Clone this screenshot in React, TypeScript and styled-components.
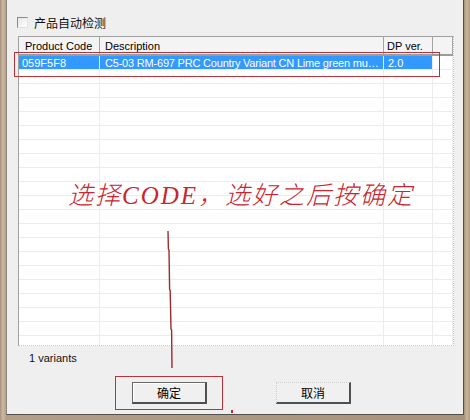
import { type FC } from "react"
import styled, { createGlobalStyle } from "styled-components"

const GlobalStyle = createGlobalStyle`
  html, body {
    margin: 0;
    padding: 0;
    background: #bca892;
  }
  body {
    font-family: "Liberation Sans", "Noto Sans CJK SC", sans-serif;
  }
`

const Frame = styled.div`
  width: 470px;
  height: 420px;
  box-sizing: border-box;
  padding: 0 6px 5px 6px;
  display: flex;
  background: linear-gradient(90deg, #a8927a 0px, #cdbba6 3px, #b39e87 6px, #a8927a 464px, #c9b6a0 467px, #ad977f 470px);
`

const Panel = styled.div`
  flex: 1;
  position: relative;
  display: flex;
  flex-direction: column;
  padding: 16px 9px 0 11px;
  background: #f0efef;
  border-left: 1px solid #8f857c;
  border-right: 1px solid #55504b;
  border-bottom: 1px solid #55504b;
`

const CheckRow = styled.label`
  display: flex;
  align-items: center;
  gap: 6px;
  height: 12px;
  font-family: "Noto Sans CJK SC", sans-serif;
  font-size: 12px;
  color: #111;
  margin-bottom: 8px;
`

const CheckBox = styled.span`
  width: 9px;
  height: 9px;
  margin-left: -1px;
  background: linear-gradient(135deg, #e6e6e6, #ffffff);
  border-top: 1px solid #8a8a8a;
  border-left: 1px solid #8a8a8a;
  border-right: 1px solid #e2e2e2;
  border-bottom: 1px solid #e2e2e2;
`

const List = styled.div`
  height: 310px;
  box-sizing: border-box;
  background: #fff;
  border-top: 1px solid #a0a0a0;
  border-left: 1px solid #a0a0a0;
  border-right: 1px dotted #c8c8c8;
  border-bottom: 1px dotted #c8c8c8;
  overflow: hidden;
  display: flex;
  flex-direction: column;
  font-size: 11px;
`

const COLS = "81px 284px 49px 1fr"

const HeaderRow = styled.div`
  display: grid;
  grid-template-columns: ${COLS};
  height: 19px;
  flex: none;
  box-sizing: border-box;
  background: #f5f4f4;
  border-bottom: 2px solid #9c9c9c;
`

const HeaderCell = styled.div<{ $pad: number }>`
  display: flex;
  align-items: center;
  padding-left: ${p => p.$pad}px;
  border-right: 1px solid #a4a4a4;
  color: #000;
  white-space: nowrap;
  overflow: hidden;
`

const Row = styled.div`
  display: grid;
  grid-template-columns: ${COLS};
  height: 14px;
  flex: none;
  box-sizing: border-box;
  border-bottom: 1px solid #ececec;
`

const Cell = styled.div<{ $selected?: boolean; $pad?: number; $tight?: boolean }>`
  display: flex;
  align-items: center;
  padding-left: ${p => p.$pad ?? 4}px;
  border-right: 1px solid #ececec;
  background: ${p => (p.$selected ? "#3399ff" : "transparent")};
  color: ${p => (p.$selected ? "#fff" : "#000")};
  letter-spacing: ${p => (p.$tight ? "-0.2px" : "normal")};
  white-space: nowrap;
  overflow: hidden;
`

const Variants = styled.div`
  margin: 6px 0 0 11px;
  font-size: 11px;
  line-height: 13px;
  color: #111;
`

const ButtonRow = styled.div`
  display: flex;
  gap: 69px;
  margin: 17px 0 0 114px;
`

const Button = styled.button<{ $default?: boolean }>`
  width: 75px;
  height: 22px;
  box-sizing: border-box;
  padding: 0;
  font-family: "Noto Sans CJK SC", sans-serif;
  font-size: 12px;
  color: #000;
  background: #f0f0f0;
  border-top: 1px ${p => (p.$default ? "solid #6a6a6a" : "dotted #d0d0d0")};
  border-left: 1px ${p => (p.$default ? "solid #6a6a6a" : "dotted #d0d0d0")};
  border-right: 2px solid #505050;
  border-bottom: 2px solid #505050;
  box-shadow: ${p => (p.$default ? "inset 1px 1px 0 #fff" : "none")};
`

const RedBox = styled.div<{ $x: number; $y: number; $w: number; $h: number }>`
  position: absolute;
  left: ${p => p.$x}px;
  top: ${p => p.$y}px;
  width: ${p => p.$w}px;
  height: ${p => p.$h}px;
  box-sizing: border-box;
  border: 1px solid #b8343a;
  pointer-events: none;
`

const Note = styled.div`
  position: absolute;
  left: 61px;
  top: 175px;
  font-family: "Liberation Serif", "Noto Sans CJK SC", serif;
  font-style: italic;
  font-weight: 300;
  font-size: 25px;
  letter-spacing: 2px;
  color: #c9262f;
  white-space: nowrap;
`

const Stroke = styled.svg`
  position: absolute;
  left: 159px;
  top: 229px;
`

const Dot = styled.span`
  position: absolute;
  left: 224px;
  top: 410px;
  width: 2px;
  height: 3px;
  background: #c02a30;
`

const rows = Array.from({ length: 21 }, (_, i) => i)

const App: FC = () => {
  return (
    <>
      <GlobalStyle />
      <Frame>
        <Panel>
          <CheckRow>
            <CheckBox />
            产品自动检测
          </CheckRow>
          <List>
            <HeaderRow>
              <HeaderCell $pad={6}>Product Code</HeaderCell>
              <HeaderCell $pad={5}>Description</HeaderCell>
              <HeaderCell $pad={3}>DP ver.</HeaderCell>
              <HeaderCell $pad={0} />
            </HeaderRow>
            {rows.map(i =>
              i === 0 ? (
                <Row key={i}>
                  <Cell $selected $pad={3}>059F5F8</Cell>
                  <Cell $selected $pad={5} $tight>C5-03 RM-697 PRC Country Variant CN Lime green mu…</Cell>
                  <Cell $selected $pad={4}>2.0</Cell>
                  <Cell />
                </Row>
              ) : (
                <Row key={i}>
                  <Cell />
                  <Cell />
                  <Cell />
                  <Cell />
                </Row>
              )
            )}
          </List>
          <Variants>1 variants</Variants>
          <ButtonRow>
            <Button $default>确定</Button>
            <Button>取消</Button>
          </ButtonRow>

          <RedBox $x={7} $y={52} $w={426} $h={25} />
          <RedBox $x={108} $y={376} $w={108} $h={34} />
          <Note>选择CODE，选好之后按确定</Note>
          <Stroke width="12" height="142" viewBox="0 0 12 142">
            <path d="M2 2 L2.4 20 L3 21 L3.6 60 L4.2 62 L5 100 L5.6 101 L6 139" fill="none" stroke="#9e2a2e" strokeWidth="1.4" />
          </Stroke>
          <Dot />
        </Panel>
      </Frame>
    </>
  )
}

export default App
